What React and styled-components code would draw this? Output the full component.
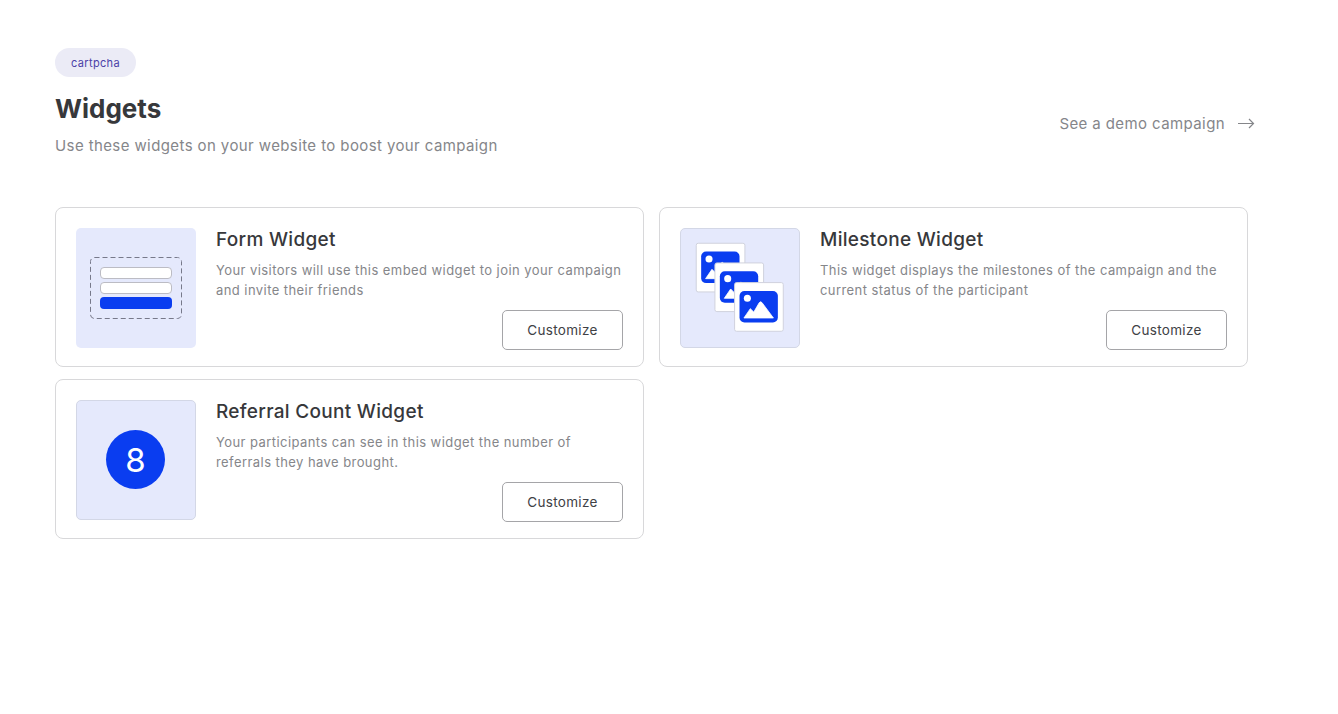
import React from 'react';
import styled, { createGlobalStyle } from 'styled-components';

const GlobalStyle = createGlobalStyle`
  html, body {
    margin: 0;
    padding: 0;
    background: #fff;
    font-family: 'Inter', 'Liberation Sans', sans-serif;
  }
`;

const Page = styled.main`
  width: 1338px;
  height: 714px;
  box-sizing: border-box;
  padding: 48px 83px 0 55px;
  overflow: hidden;
`;

const Header = styled.header`
  display: flex;
  justify-content: space-between;
  align-items: flex-end;
  margin-bottom: 50px;
`;

const Badge = styled.span`
  display: inline-flex;
  align-items: center;
  justify-content: center;
  box-sizing: border-box;
  width: 81px;
  height: 29px;
  padding-top: 1px;
  border-radius: 15px;
  background: #ebebf6;
  color: #4a3fa8;
  font-size: 11px;
  letter-spacing: 0.35px;
`;

const Title = styled.h1`
  margin: 14px 0 0;
  font-size: 26px;
  line-height: 36px;
  font-weight: 700;
  color: #37383b;
`;

const Subtitle = styled.p`
  margin: 8px 0 0;
  font-size: 15px;
  line-height: 22px;
  letter-spacing: 0.4px;
  color: #85868a;
`;

const DemoLink = styled.a`
  display: flex;
  align-items: center;
  gap: 12px;
  margin-bottom: 21px;
  color: #85868a;
  font-size: 15px;
  line-height: 24px;
  letter-spacing: 0.4px;
`;

const Grid = styled.section`
  display: grid;
  grid-template-columns: 589px 589px;
  grid-auto-rows: 160px;
  column-gap: 15px;
  row-gap: 12px;
`;

const Card = styled.article`
  box-sizing: border-box;
  display: flex;
  gap: 20px;
  padding: 20px 20px 16px;
  border: 1px solid #d8d8da;
  border-radius: 8px;
  background: #fff;
`;

const Thumb = styled.div`
  flex: none;
  display: flex;
  align-items: center;
  justify-content: center;
  box-sizing: border-box;
  width: 120px;
  height: 120px;
  border-radius: 5px;
  background: #e5e9fc;
  border: ${p => (p.$outlined ? '1px solid #d3d7e6' : 'none')};
`;

const Body = styled.div`
  flex: 1;
  display: flex;
  flex-direction: column;
`;

const CardTitle = styled.h2`
  margin: 0;
  font-size: 19px;
  line-height: 24px;
  font-weight: 500;
  letter-spacing: 0.3px;
  color: #37383b;
`;

const CardText = styled.p`
  margin: 8px 0 0;
  font-size: 13px;
  line-height: 20px;
  letter-spacing: 0.43px;
  color: #85868a;
`;

const CustomizeButton = styled.button`
  align-self: flex-end;
  margin-top: auto;
  width: 121px;
  height: 40px;
  border: 1px solid #a5a5a8;
  border-radius: 5px;
  background: #fff;
  color: #404145;
  font-family: inherit;
  font-size: 13.5px;
  letter-spacing: 0.3px;
`;

const DashedBox = styled.div`
  position: relative;
  box-sizing: border-box;
  width: 92px;
  height: 62px;
  padding: 10px;
  display: flex;
  flex-direction: column;
  gap: 3px;
`;

const DashOutline = styled.svg`
  position: absolute;
  inset: 0;
`;

const FakeInput = styled.div`
  height: 12px;
  box-sizing: border-box;
  background: #fff;
  border: 1px solid #bcbcc4;
  border-radius: 4px;
`;

const FakeSubmit = styled.div`
  height: 12px;
  background: #0a3df0;
  border-radius: 4px;
`;

const CountCircle = styled.div`
  width: 59px;
  height: 59px;
  margin: 0 1px 1px 0;
  border-radius: 50%;
  background: #0a3df0;
  color: #fff;
  display: flex;
  align-items: center;
  justify-content: center;
  font-size: 33px;
  font-weight: 400;
`;

const ImageCard = ({ x, y }) => (
  <g transform={`translate(${x} ${y})`}>
    <rect x="0.5" y="0.5" width="49.5" height="49.5" rx="2" fill="#fff" stroke="#cfd1dc" />
    <rect x="5.5" y="9" width="39" height="32" rx="5" fill="#0a3df0" />
    <circle cx="13.5" cy="16.5" r="3.6" fill="#fff" />
    <path
      d="M10 36.5 L16.5 27 L20 30.5 L25.5 21 Q27 19 28.5 21 L40 36.5 Z"
      fill="#fff"
      stroke="#fff"
      strokeWidth="0.8"
      strokeLinejoin="round"
    />
  </g>
);

const StackedImages = () => (
  <svg width="120" height="120" viewBox="0 0 120 120">
    <ImageCard x={15} y={14} />
    <ImageCard x={34} y={34} />
    <ImageCard x={54} y={54} />
  </svg>
);

const ArrowIcon = () => (
  <svg width="18" height="12" viewBox="0 0 18 12" fill="none" stroke="#85868a" strokeWidth="1.2">
    <path d="M1 5.5 H16.5 M12 1 L16.5 5.5 L12 10" />
  </svg>
);

const widgets = [
  {
    title: 'Form Widget',
    text: 'Your visitors will use this embed widget to join your campaign and invite their friends',
    thumb: (
      <Thumb>
        <DashedBox>
          <DashOutline width="92" height="62" viewBox="0 0 92 62" fill="none">
            <rect
              x="0.5"
              y="0.5"
              width="91"
              height="61"
              rx="4"
              stroke="#77798a"
              strokeDasharray="5 3"
            />
          </DashOutline>
          <FakeInput />
          <FakeInput />
          <FakeSubmit />
        </DashedBox>
      </Thumb>
    ),
  },
  {
    title: 'Milestone Widget',
    text: 'This widget displays the milestones of the campaign and the current status of the participant',
    thumb: (
      <Thumb $outlined>
        <StackedImages />
      </Thumb>
    ),
  },
  {
    title: 'Referral Count Widget',
    text: 'Your participants can see in this widget the number of referrals they have brought.',
    thumb: (
      <Thumb $outlined>
        <CountCircle>8</CountCircle>
      </Thumb>
    ),
  },
];

const App = () => (
  <Page>
    <GlobalStyle />
    <Header>
      <div>
        <Badge>cartpcha</Badge>
        <Title>Widgets</Title>
        <Subtitle>Use these widgets on your website to boost your campaign</Subtitle>
      </div>
      <DemoLink>
        See a demo campaign
        <ArrowIcon />
      </DemoLink>
    </Header>
    <Grid>
      {widgets.map(w => (
        <Card key={w.title}>
          {w.thumb}
          <Body>
            <CardTitle>{w.title}</CardTitle>
            <CardText>{w.text}</CardText>
            <CustomizeButton>Customize</CustomizeButton>
          </Body>
        </Card>
      ))}
    </Grid>
  </Page>
);

export default App;
